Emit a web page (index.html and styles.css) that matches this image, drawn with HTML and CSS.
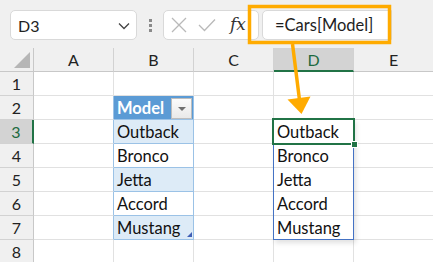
FILE: index.html
```html
<!DOCTYPE html>
<html>
<head>
<meta charset="utf-8">
<link rel="stylesheet" href="styles.css">
</head>
<body>
<div class="app">
  <div class="toolbar">
    <div class="namebox">
      <span class="nb-text">D3</span>
      <svg class="chev" width="12" height="8" viewBox="0 0 12 8"><path d="M1 1.5 L6 6.5 L11 1.5" fill="none" stroke="#444" stroke-width="1.3"/></svg>
    </div>
    <div class="dots"><i></i><i></i><i></i></div>
    <div class="btnbox">
      <svg class="ico" width="16" height="16" viewBox="0 0 16 16"><path d="M1 1 L15 15 M15 1 L1 15" stroke="#b9b9b9" stroke-width="1.3" fill="none"/></svg>
      <svg class="ico" width="18" height="14" viewBox="0 0 18 14"><path d="M1 7 L6.5 12.5 L17 1.5" stroke="#b9b9b9" stroke-width="1.3" fill="none"/></svg>
      <span class="fx">fx</span>
    </div>
    <div class="formula">=Cars[Model]</div>
  </div>
  <div class="sheet">
    <div class="c corner"><span class="tri"></span></div>
    <div class="c ch">A</div>
    <div class="c ch">B</div>
    <div class="c ch">C</div>
    <div class="c ch sel">D</div>
    <div class="c ch">E</div>

    <div class="c rh">1</div><div class="c"></div><div class="c"></div><div class="c"></div><div class="c"></div><div class="c"></div>

    <div class="c rh">2</div><div class="c tleft"></div><div class="c thead">Model<span class="filter"><span class="ftri"></span></span></div><div class="c"></div><div class="c"></div><div class="c"></div>

    <div class="c rh rsel">3</div><div class="c tleft"></div><div class="c trow band">Outback</div><div class="c"></div><div class="c dv">Outback</div><div class="c"></div>

    <div class="c rh">4</div><div class="c tleft"></div><div class="c trow">Bronco</div><div class="c"></div><div class="c dv">Bronco</div><div class="c"></div>

    <div class="c rh">5</div><div class="c tleft"></div><div class="c trow band">Jetta</div><div class="c"></div><div class="c dv">Jetta</div><div class="c"></div>

    <div class="c rh">6</div><div class="c tleft"></div><div class="c trow">Accord</div><div class="c"></div><div class="c dv">Accord</div><div class="c"></div>

    <div class="c rh">7</div><div class="c tleft"></div><div class="c trow band tlast">Mustang<span class="resize"></span></div><div class="c"></div><div class="c dv">Mustang</div><div class="c"></div>

    <div class="c rh">8</div><div class="c"></div><div class="c"></div><div class="c"></div><div class="c"></div><div class="c"></div>
  </div>
  <div class="spill"></div>
  <div class="active"><span class="handle"></span></div>
  <svg class="callout" width="433" height="262" viewBox="0 0 433 262">
    <rect x="249.5" y="6.5" width="140" height="36" fill="none" stroke="#ffab00" stroke-width="3.5"/>
    <line x1="292.5" y1="44" x2="299.5" y2="100" stroke="#ffab00" stroke-width="3.5"/>
    <polygon points="287.5,99.5 310.5,96.5 301.5,114" fill="#ffab00"/>
  </svg>
</div>
</body>
</html>
```

FILE: styles.css
```css
* { box-sizing: border-box; }
html, body { margin: 0; padding: 0; }
body {
  width: 433px;
  height: 262px;
  overflow: hidden;
  background: #ffffff;
  font-family: "Lato", "Open Sans", sans-serif;
}
.app {
  position: relative;
  width: 433px;
  height: 262px;
  overflow: hidden;
}
.toolbar {
  height: 48px;
  background: #f0f0f0;
  display: flex;
  align-items: flex-start;
  padding: 10px 0 0 10px;
}
.namebox {
  width: 127px;
  height: 30px;
  background: #fff;
  border: 1px solid #d9d9d9;
  border-radius: 5px;
  display: flex;
  align-items: center;
  justify-content: space-between;
  padding: 0 6px 0 7px;
  font-size: 16px;
  color: #222;
}
.chev { margin-top: 1px; }
.dots {
  width: 26px;
  height: 30px;
  display: flex;
  flex-direction: column;
  align-items: center;
  justify-content: center;
  gap: 2px;
}
.dots i {
  display: block;
  width: 3px;
  height: 3px;
  background: #8a8a8a;
}
.btnbox {
  width: 96px;
  height: 30px;
  background: #fff;
  border: 1px solid #d9d9d9;
  border-radius: 5px;
  display: flex;
  align-items: center;
  padding-left: 7px;
  gap: 11px;
}
.fx {
  font-family: "DejaVu Serif", "Liberation Serif", serif;
  font-style: italic;
  font-size: 17px;
  color: #333;
  margin-left: 3px;
  margin-top: -2px;
}
.formula {
  margin-left: 3px;
  width: 130px;
  height: 30px;
  background: #fff;
  border: 1px solid #d9d9d9;
  border-radius: 5px 0 0 5px;
  font-size: 16.5px;
  color: #1e1e1e;
  display: flex;
  align-items: center;
  padding-left: 12px;
}
.sheet {
  display: grid;
  grid-template-columns: 34px repeat(5, 80px);
  grid-template-rows: repeat(9, 24px);
}
.c {
  border-right: 1px solid #e1e1e1;
  border-bottom: 1px solid #e1e1e1;
  font-size: 16.5px;
  color: #111;
  display: flex;
  align-items: center;
  padding-left: 3px;
  white-space: nowrap;
  position: relative;
}
.corner {
  background: #f0f0f0;
  border-right: 1px solid #c8c8c8;
  border-bottom: 1px solid #c8c8c8;
}
.tri {
  position: absolute;
  right: 3px;
  bottom: 3px;
  width: 0;
  height: 0;
  border-left: 16px solid transparent;
  border-bottom: 16px solid #b6b6b6;
}
.ch {
  background: #f0f0f0;
  border-right: 1px solid #d2d2d2;
  border-bottom: 1px solid #c8c8c8;
  justify-content: center;
  padding-left: 0;
  color: #222;
  font-size: 16px;
}
.ch.sel {
  background: #d3d3d3;
  border-bottom: 2px solid #217346;
  color: #1d6a40;
}
.rh {
  background: #f0f0f0;
  border-right: 1px solid #c8c8c8;
  border-bottom: 1px solid #d2d2d2;
  justify-content: center;
  padding-left: 0;
  color: #222;
  font-size: 16px;
}
.rh.rsel {
  background: #d3d3d3;
  border-right: 2px solid #217346;
  color: #1d6a40;
}
.tleft { border-right-color: #9bc2e6; }
.thead {
  background: #5b9bd5;
  color: #fff;
  font-weight: 700;
  border-right-color: #9bc2e6;
  border-bottom-color: #9bc2e6;
}
.filter {
  position: absolute;
  right: 1px;
  top: 2px;
  width: 21px;
  height: 21px;
  background: linear-gradient(#fbfbfb, #e9e9e9);
  border: 1px solid #bdbdbd;
  display: flex;
  align-items: center;
  justify-content: center;
}
.ftri {
  width: 0;
  height: 0;
  border-left: 4px solid transparent;
  border-right: 4px solid transparent;
  border-top: 4px solid #707070;
}
.trow {
  border-right-color: #9bc2e6;
  border-bottom-color: #9bc2e6;
}
.band { background: #ddebf7; }
.resize {
  position: absolute;
  right: 1px;
  bottom: 2px;
  width: 0;
  height: 0;
  border-left: 5px solid transparent;
  border-bottom: 5px solid #3f5fb5;
}
.dv { color: #111; }
.spill {
  position: absolute;
  left: 273px;
  top: 119px;
  width: 81px;
  height: 121px;
  border: 1px solid #4472c4;
  box-shadow: 2px 3px 5px rgba(0, 0, 0, 0.12);
}
.active {
  position: absolute;
  left: 272px;
  top: 118px;
  width: 83px;
  height: 27px;
  border: 2px solid #217346;
}
.handle {
  position: absolute;
  right: -5px;
  bottom: -5px;
  width: 7px;
  height: 7px;
  background: #217346;
  border: 1px solid #fff;
}
.callout {
  position: absolute;
  left: 0;
  top: 0;
  pointer-events: none;
}
```
